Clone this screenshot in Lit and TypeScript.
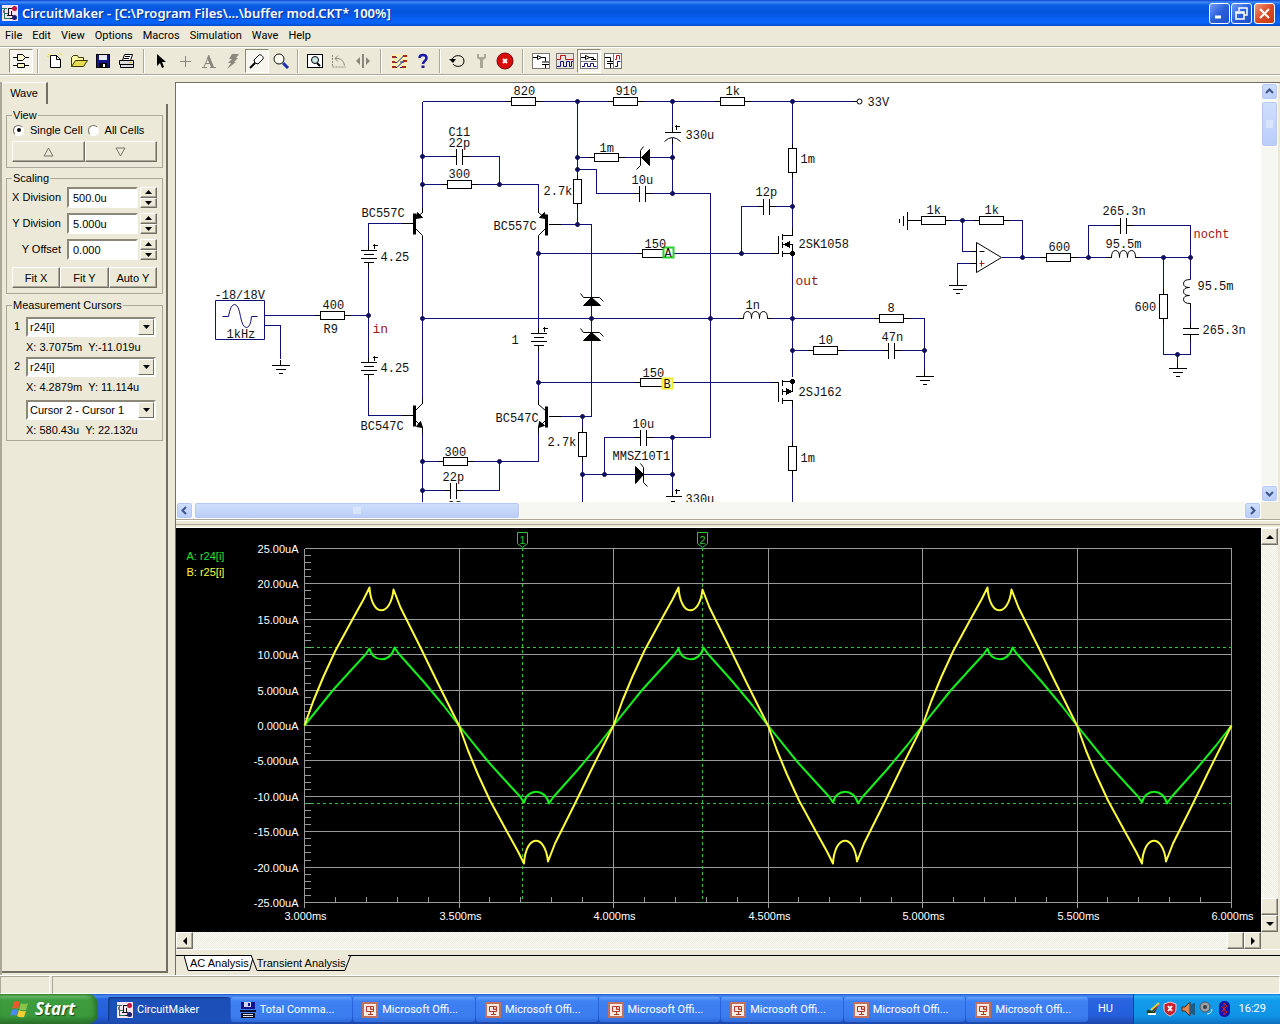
import { LitElement, html, svg, css } from "lit";
import { customElement, state } from "lit/decorators.js";
import { classMap } from "lit/directives/class-map.js";

/* ---------- shared pictograms ---------- */

const appIcon = html`<svg width="16" height="16" viewBox="0 0 16 16" aria-hidden="true">
  <rect width="16" height="16" fill="#f6e3f2" />
  <path d="M0 3.5h5M2.5 3v10M2 8.5h4M2 13.5h6" stroke="#1c7a5a" fill="none" />
  <path d="M6.5 3v7M5 10.5h6M9.5 6v4M8 13.5h3M6 3.5h4" stroke="#111" fill="none" />
  <circle cx="12.5" cy="3.5" r="2.5" fill="#c3123c" />
  <circle cx="12.5" cy="12.5" r="2.5" fill="#1b1f78" />
  <rect x="1" y="5" width="2" height="3" fill="#777" />
</svg>`;

const pptIcon = html`<svg width="16" height="16" viewBox="0 0 16 16" aria-hidden="true">
  <rect x="0" y="0" width="16" height="16" fill="#c0705c" />
  <rect x="2" y="2" width="12" height="12" fill="#fbeae4" />
  <path d="M4.5 4.5h7v5h-7zM6 12.5h5M8.5 10v2" stroke="#b03a24" fill="none" />
  <path d="M8.5 4.5v3h3" stroke="#b03a24" fill="#e39a87" />
</svg>`;

const diskIcon = html`<svg width="16" height="16" viewBox="0 0 16 16" aria-hidden="true">
  <path d="M1 0h14v7H1z" fill="#12128c" />
  <path d="M4 0h7v5H4z" fill="#cfd4f4" />
  <path d="M8 1h2v3H8z" fill="#12128c" />
  <path d="M0 8h16v2H0zM1 11h14v5H1z" fill="#0b0b2a" />
  <path d="M3 12h10v1H3zM3 14h10v1H3z" fill="#dcdcdc" />
</svg>`;

const glyphs: Record<string, unknown> = {
  parts: svg`<path d="M1 5.5h4M1 13.5h4M13 5.5h4M13 13.5h4M5.5 2.5h5l3 3-3 3h-5zM5.5 11.5h7v4h-7z" fill="#fffccf" stroke="#000"/>`,
  fresh: svg`<path d="M4.5 3.5h6l4 4v8h-10z" fill="#fff" stroke="#000"/><path d="M10.5 3.5v4h4" fill="none" stroke="#000"/><path d="M13 1l3 2M1 4l2 1M2 2l2 1" stroke="#e9dc3a"/>`,
  open: svg`<path d="M1.5 14.5v-9l2-2h4l1 2h5v3" fill="#fbf6a4" stroke="#3b3700"/><path d="M1.5 14.5l4-6h12l-4 6z" fill="#e5dc52" stroke="#3b3700"/>`,
  save: svg`<rect x="2.5" y="2.5" width="13" height="13" fill="#15158a" stroke="#000"/><rect x="5" y="3" width="8" height="5" fill="#e8e8f4"/><rect x="5" y="11" width="8" height="4" fill="#000"/><rect x="9" y="12" width="2" height="3" fill="#fff"/>`,
  print: svg`<path d="M4.5 8.5l2-6h8l-2 6" fill="#fff" stroke="#000"/><path d="M1.5 8.5h14v4h-14zM2.5 12.5h13v3h-13z" fill="#ddd" stroke="#000"/><path d="M7 4.5h5M6 6.5h5" stroke="#000"/><path d="M11 10.5h3" stroke="#e3c400"/>`,
  arrow: svg`<path d="M5 2v12l3-3 2 5 2-1-2-5h4z" fill="#000"/>`,
  plus: svg`<path d="M9.5 4v11M4 9.5h11" stroke="#8a887c"/>`,
  letter: svg`<path d="M2 15.5h5M10 15.5h6M4 15L9 3M6 11.5h6" fill="none" stroke="#8a887c"/><path d="M9 3l5 12h-3L7 6z" fill="#8a887c"/>`,
  bolt: svg`<path d="M8 2h7l-3 4h2l-4 4h2l-9 7 4-6H4l4-4H5z" fill="#8a887c"/>`,
  probe: svg`<path d="M7 11l-1-3 5-5c2-1 5 2 4 4l-5 5z" fill="#fff" stroke="#000"/><path d="M2 16l5-5" stroke="#000" stroke-width="2"/>`,
  zoom: svg`<circle cx="7" cy="7" r="5" fill="#fdfdf4" stroke="#111"/><path d="M11 11l5 5" stroke="#1a2fae" stroke-width="3"/>`,
  find: svg`<rect x="1.5" y="2.5" width="15" height="13" fill="#fff" stroke="#000"/><circle cx="9" cy="8" r="3.5" fill="#cfe7e7" stroke="#000"/><path d="M11 11l3 3" stroke="#000" stroke-width="2"/>`,
  rotate: svg`<path d="M2.5 3v12h13" fill="none" stroke="#8a887c" stroke-dasharray="2 1"/><path d="M5 6.5c6-1 9 3 9.500 7M5 6.500l3-3M5 6.500l3 3" fill="none" stroke="#8a887c"/>`,
  mirror: svg`<path d="M9 2v14" stroke="#8a887c" stroke-width="2"/><path d="M6 5v8L2 9zM12 5v8l4-4z" fill="#8a887c"/>`,
  net: svg`<rect x="1" y="2" width="16" height="15" fill="#f8f0b8"/><path d="M2 5.500h5M2 10.500h5l7-7M2 15.500h5l7-7M10 15.500h6M10 10h4" fill="none" stroke="#17247c"/><path d="M2 5h4M2 10h3M2 15h4M13 4h4M13 9h4M12 15h4" stroke="#a8261a" stroke-width="2"/>`,
  help: svg`<path d="M5.500 6c0-4 7-4 7 0 0 3-3.500 3-3.500 6" fill="none" stroke="#1a1aa6" stroke-width="2.500"/><rect x="7.500" y="13.500" width="3" height="2.500" fill="#1a1aa6"/>`,
  undo: svg`<path d="M4 8c1-6 12-6 12 1 0 6-8 7-11 3" fill="none" stroke="#000"/><path d="M1 7h7l-3 4z" fill="#000"/>`,
  wrench: svg`<path d="M5 2v4l3 2v8h3V8l3-2V2h-2v3H7V2z" fill="#aaa797"/>`,
  stop: svg`<circle cx="9" cy="9" r="8" fill="#d90b0b" stroke="#7c0606"/><path d="M7 7l4 4M11 7l-4 4" stroke="#fff" stroke-width="2"/>`,
  viewA: svg`<rect x="0.500" y="1.500" width="17" height="15" fill="#fff" stroke="#777"/><path d="M1 5.500h4M9 5.500h4.500v4M10 10h7M10 12.500h7M13.500 13v3M5.500 3.500l4 2-4 2z" fill="none" stroke="#000"/>`,
  viewB: svg`<rect x="0.500" y="1.500" width="17" height="15" fill="#e8e6dc" stroke="#777"/><path d="M1 7.500h3.500v-4h5v4H17" fill="none" stroke="#c01414"/><path d="M1 14.500h3.500v-5h3v5h3v-5h3v5h2v-5H17" fill="none" stroke="#12127c"/>`,
  viewC: svg`<rect x="0.500" y="1.500" width="17" height="15" fill="#fff" stroke="#777"/><path d="M0 9.500h18" stroke="#777"/><path d="M1 5.500h4M9 5.500h4.500v2M5.500 3.500l4 2-4 2zM11 7.500h5" fill="none" stroke="#000"/><path d="M2 14.500h2.500v-3h3v3h3v-3h3v3h3" fill="none" stroke="#12127c"/>`,
  viewD: svg`<rect x="0.500" y="1.500" width="17" height="15" fill="#fff" stroke="#777"/><path d="M9.500 1v16" stroke="#777"/><path d="M1 5.500h5.500v4M3 9.500h6M3 11.500h6M6.500 12v4" fill="none" stroke="#000"/><path d="M11 7.500h1.500v-4h3v4" fill="none" stroke="#c01414"/><path d="M11 14.500h2.500v-5h3" fill="none" stroke="#12127c"/>`,
};

const trayGlyphs = [
  svg`<path d="M2 10l6 2 4-8" fill="none" stroke="#1b3d1b" stroke-width="3"/><path d="M6 9l8-7" stroke="#e9d33a" stroke-width="2"/><path d="M3 13h8" stroke="#fff" stroke-width="2"/><path d="M8 11l6-7" stroke="#d23c8c"/>`,
  svg`<path d="M7 1l6 2v5c0 4-4 6-6 7-2-1-6-3-6-7V3z" fill="#c8202c" stroke="#f3c9cc"/><path d="M5 5l4 5M9 5l-4 5" stroke="#fff" stroke-width="2"/>`,
  svg`<path d="M1 6h3l5-5v14l-5-5H1z" fill="#e08652" stroke="#53250f"/><path d="M11 3v10M13 2v12" stroke="#222"/>`,
  svg`<ellipse cx="6" cy="6" rx="5" ry="5" fill="#9aa0a6" stroke="#50555a"/><circle cx="6" cy="6" r="2" fill="#3b3e42"/><path d="M8 13c3 0 5-2 5-5" fill="none" stroke="#e0ecf7"/>`,
  svg`<rect x="2" y="0" width="11" height="16" rx="5" fill="#1414a8"/><path d="M4 5l6 6-3 3V2l3 3-6 6" fill="none" stroke="#d21f2b"/>`,
];

/* ---------- schematic drawing ---------- */

const wires = [
  "M422 101H852", "M422 101V212", "M422 156H499V184", "M422 184H538V212", "M422 235V403", "M422 427V510",
  "M368 315V223H401", "M368 315V415H401", "M264 315H368", "M264 325H280V358",
  "M538 235V404", "M538 427V461H422", "M499 461V490H422", "M577 101V224", "M555 224H591V416H555",
  "M577 157H672", "M577 169H596V193H710V437H604V474", "M672 101V193", "M672 437V490", "M582 416V510", "M582 474H672",
  "M538 253H770", "M538 382H770", "M741 253V206H792", "M792 101V227", "M792 253V376", "M792 406V510",
  "M422 318H924V370", "M792 350H924",
  "M921 220H1022V257", "M962 220V251H970", "M970 263H957V280", "M1001 257H1190", "M1088 257V225H1190V354H1163V257", "M1177 354V364",
];
const nodes = [
  [422, 156], [422, 184], [499, 184], [422, 318], [368, 315], [422, 461], [422, 490], [499, 461], [538, 253], [538, 382],
  [577, 101], [577, 157], [577, 169], [577, 224], [672, 101], [672, 157], [672, 193], [792, 101], [792, 206], [741, 253],
  [591, 318], [710, 318], [792, 318], [792, 350], [924, 350], [582, 416], [582, 474], [604, 474], [672, 437], [672, 474],
  [962, 220], [1022, 257], [1088, 257], [1163, 257], [1190, 257], [1177, 354],
];
const resistorsH = [[511, 101], [613, 101], [720, 101], [447, 184], [594, 157], [642, 253], [640, 382], [443, 461], [320, 315], [879, 318], [813, 350], [921, 220], [979, 220], [1046, 257]];
const resistorsV = [[577, 179], [792, 148], [582, 432], [792, 446], [1163, 294]];
const capsH = [[456, 156], [639, 193], [763, 206], [450, 490], [640, 437], [888, 350], [1120, 225]];
const batteries = [[368, 250], [368, 362], [538, 333]];
const grounds = [[280, 365], [924, 376], [957, 285], [1177, 368]];
const labels: [number, number, string][] = [
  [513, 94, "820"], [448, 135, "C11"], [448, 146, "22p"], [448, 177, "300"], [361, 216, "BC557C"], [493, 229, "BC557C"],
  [380, 260, "4.25"], [380, 371, "4.25"], [214, 298, "-18/18V"], [226, 337, "1kHz"], [322, 308, "400"], [323, 332, "R9"],
  [360, 429, "BC547C"], [495, 421, "BC547C"], [444, 455, "300"], [442, 480, "22p"], [447, 509, "C8"], [511, 343, "1"],
  [615, 94, "910"], [725, 94, "1k"], [867, 105, "33V"], [685, 138, "330u"], [599, 151, "1m"], [543, 194, "2.7k"], [631, 183, "10u"],
  [800, 162, "1m"], [755, 195, "12p"], [644, 247, "150"], [798, 247, "2SK1058"], [745, 308, "1n"], [887, 311, "8"],
  [818, 343, "10"], [881, 340, "47n"], [642, 376, "150"], [798, 395, "2SJ162"], [800, 461, "1m"], [547, 445, "2.7k"],
  [632, 427, "10u"], [612, 459, "MMSZ10T1"], [685, 502, "330u"],
  [926, 213, "1k"], [984, 213, "1k"], [1048, 250, "600"], [1102, 214, "265.3n"], [1105, 247, "95.5m"],
  [1134, 310, "600"], [1197, 289, "95.5m"], [1202, 333, "265.3n"],
];

const schematic = () => svg`
  <g transform="translate(-175.5 -82.5)">
    <g class="wire">${wires.map((d) => svg`<path d=${d} />`)}</g>
    <g class="part">
      ${resistorsH.map(([x, y]) => svg`<path d="M${x - 6} ${y}h36" /><rect x=${x} y=${y - 4} width="24" height="8" />`)}
      ${resistorsV.map(([x, y]) => svg`<path d="M${x} ${y - 5}v34" /><rect x=${x - 4} y=${y} width="8" height="24" />`)}
      ${capsH.map(([x, y]) => svg`<path d="M${x} ${y}h6" class="gap" /><path d="M${x - 6} ${y}h6m0 -8v16M${x + 6} ${y - 8}v16m0 -8h6" />`)}
      ${batteries.map(([x, y]) => svg`<path d="M${x} ${y}v12" class="gap" /><path d="M${x} ${y - 6}v6M${x - 8} ${y}h16M${x - 5} ${y + 4}h10M${x - 8} ${y + 8}h16M${x - 5} ${y + 12}h10M${x} ${y + 12}v5M${x + 4} ${y - 5}h5M${x + 6} ${y - 7}v5" />`)}
      ${grounds.map(([x, y]) => svg`<path d="M${x} ${y - 6}v6M${x - 9} ${y}h18M${x - 5} ${y + 4}h10M${x - 2} ${y + 8}h4" />`)}
      <path d="M899 218v4M903 215v10M907 211v18M907 220h8" />
      <path d="M1190 328v6" class="gap" /><path d="M1190 322v6M1182 328h16M1182 334h16M1190 334v6" />
      <path d="M672 132v5" class="gap" /><path d="M664 132h16M672 126v6M672 138v5M674 126h5M676 124v5" />
      <path d="M664 141q8 -8 16 0" class="smooth" />
      <path d="M665 496h16M672 490v6M674 490h5M676 488v5M670 501h4" />
      <path d="M401 223h12M401 415h12M548 224h12M548 416h12" />
      <path d="M852 101h5" />
      <circle cx="859" cy="101" r="2.5" class="smooth" />
    </g>
    <g class="part smooth">
      <path d="M422 207v5l-7 6M415 228l7 7v5M422 398v5l-7 7M415 420l7 7v6" />
      <path d="M538 207v5l7 6M545 228l-7 7v5M538 399v5l7 6M545 420l-7 7v6" />
      <path class="solid" d="M415 218l2 -6 5 5zM545 218l-6 -1 5 -5zM422 427l-6 -1 4 -5zM538 427l1 -6 5 4z" />
      <path class="base" d="M414 213v21M414 405v21M546 214v21M546 406v21" />
      <path class="solid" d="M641 157l8 -8v16zM591 297l-8 8h17zM591 332l-8 8h17zM643 474l-8 -8v17z" />
      <path d="M643 146l-3 4v15l-4 4M580 293l3 4h16l4 4M580 328l3 4h16l4 4M640 463l3 4v15l4 4" />
    </g>
    <g class="part">
      <path d="M770 253h8M778 235v18M782 233v6M782 241v6M782 250v6M782 235h10v-8M782 253h10v-9h-10" />
      <path d="M770 382h8M778 382v19M782 379v6M782 388v6M782 397v6M782 381h10v10h-10M782 400h10v6" />
      <path class="solid" d="M784 244l5 -3v6zM791 391l-5 -3v6z" />
      <circle class="solid" cx="792" cy="253" r="2" /><circle class="solid" cx="792" cy="381" r="2" />
    </g>
    <g class="part smooth">
      <path class="gap" d="M743 318h24M1111 257h24M1190 279v24" />
      <path d="M738 318h5q0 -7 4 -7t4 7q0 -7 4 -7t4 7q0 -7 4 -7t4 7h4" />
      <path d="M1106 257h5q0 -7 4 -7t4 7q0 -7 4 -7t4 7q0 -7 4 -7t4 7h4" />
      <path d="M1190 279q-7 0 -7 4t6 4q-6 0 -6 4t6 4q-6 0 -6 4t7 4v5" />
      <path d="M976 242v30l25 -15zM970 251h6M970 263h6M979 251h5" />
      <path class="red" d="M979 263h5M981 260v6" />
      <path class="source" d="M215 300h49v39h-49zM222 316h6q2 -12 6 -12t6 12q2 11 6 11t5 -11h6" />
    </g>
    ${nodes.map(([x, y]) => svg`<circle class="node" cx=${x} cy=${y} r="2" />`)}
    <rect class="probe-a" x="663" y="247" width="10" height="10" />
    <rect class="probe-b" x="662" y="378" width="10" height="10" />
    <g class="label">
      ${labels.map(([x, y, t]) => svg`<text x=${x} y=${y}>${t}</text>`)}
      <text x="664" y="256">A</text><text x="663" y="387">B</text>
    </g>
    <g class="net">
      <text x="372" y="332">in</text><text x="795" y="284">out</text><text class="small" x="1193" y="237">nocht</text>
    </g>
  </g>`;

/* ---------- waveform plot ---------- */

const HALF = 154.5;
const X0 = 304;
const Y0 = 725;
type Pt = [number, number];
type Lobe = { rise: Pt[]; dip: [Pt, Pt, Pt]; fall: Pt[] };
const yellowLobe: Lobe = {
  rise: [[0, 0], [9, 25], [19, 49], [31, 75], [49, 108], [59, 126], [65, 138]],
  dip: [[67, 108], [86, 108], [89, 136]],
  fall: [[96, 118], [116, 78], [133, 43]],
};
const greenLobe: Lobe = {
  rise: [[0, 0], [29, 36], [49, 58], [61, 71], [65, 77]],
  dip: [[68, 63], [86, 62], [90, 78]],
  fall: [[94, 72], [119, 44], [139, 20]],
};
const trace = (lobe: Lobe) => {
  let d = "";
  for (let i = 0; i < 6; i++) {
    const sign = i % 2 ? 1 : -1;
    const at = ([x, v]: Pt) => `${X0 + i * HALF + x} ${Y0 + sign * v}`;
    d += lobe.rise.map((p, n) => (n || i ? "L" : "M") + at(p)).join("");
    d += "C" + lobe.dip.map(at).join(" ");
    d += lobe.fall.map((p) => "L" + at(p)).join("");
  }
  return d + `L${X0 + 6 * HALF} ${Y0}`;
};
const yLabels = ["25.00uA", "20.00uA", "15.00uA", "10.00uA", "5.000uA", "0.000uA", "-5.000uA", "-10.00uA", "-15.00uA", "-20.00uA", "-25.00uA"];
const xLabels = ["3.000ms", "3.500ms", "4.000ms", "4.500ms", "5.000ms", "5.500ms", "6.000ms"];
const yAt = (i: number) => Math.round(548 + i * 35.4);
const xAt = (i: number) => Math.round(X0 + i * HALF);

const plot = () => svg`
  <g transform="translate(-175.5 -527.5)">
    <g class="grid">
      ${yLabels.map((_, i) => svg`<path d="M304 ${yAt(i)}H1231" />`)}
      ${xLabels.map((_, i) => svg`<path d="M${xAt(i)} 548V907" />`)}
      ${Array.from({ length: 50 }, (_, i) => svg`<path d="M304 ${Math.round(548 + i * 7.08)}h6" />`)}
      ${Array.from({ length: 30 }, (_, i) => svg`<path d="M${Math.round(304 + i * 30.9)} 902v-6" />`)}
    </g>
    <path class="cursor" d="M304 647H1231M304 803H1231M522 547V902M702 547V902" />
    <path class="green" d=${trace(greenLobe)} />
    <path class="yellow" d=${trace(yellowLobe)} />
    <path class="flag" d="M517 532h10v11l-5 4 -5 -4zM697 532h10v11l-5 4 -5 -4z" />
    <g class="axis">
      ${yLabels.map((t, i) => svg`<text class="end" x="298" y=${yAt(i) + 4}>${t}</text>`)}
      ${xLabels.map((t, i) => svg`<text class="mid" x=${xAt(i) + 1} y="919">${t}</text>`)}
      <text class="flag-no" x="522" y="543">1</text><text class="flag-no" x="702" y="543">2</text>
      <text class="name-a" x="186" y="559">A: r24[i]</text>
      <text class="name-b" x="186" y="575">B: r25[i]</text>
    </g>
  </g>`;

/* ---------- wave control panel ---------- */

@customElement("wave-panel")
export class WavePanel extends LitElement {
  static styles = css`
    :host { display: flex; flex-direction: column; width: 168px; flex: none; box-sizing: border-box; font: 11px/14px "Liberation Sans", Arial, sans-serif; color: #000; border-left: 2px solid #aca899; }
    .tab { align-self: flex-start; font: inherit; color: inherit; border: 0; border-top: 1px solid #fff; border-right: 2px solid #716f64; background: #ece9d8; width: 46px; height: 22px; padding: 0 0 2px; }
    .page { flex: 1; border-right: 2px solid #716f64; border-bottom: 2px solid #716f64; padding: 4px 3px 0 4px; margin-bottom: 2px; display: flex; flex-direction: column; gap: 3px; }
    fieldset { margin: 0; padding: 1px 5px 5px; border: 1px solid #aca899; min-width: 0; }
    legend { padding: 0 1px; margin: 0; height: 14px; }
    .radios { display: flex; gap: 4px; height: 14px; align-items: center; margin-bottom: 4px; }
    .radios label { display: flex; align-items: center; gap: 5px; white-space: nowrap; }
    .radios input { appearance: none; margin: 0 1px; width: 11px; height: 11px; border-radius: 50%; background: #fff; border: 1px solid; border-color: #716f64 #fff #fff #716f64; display: grid; place-items: center; }
    .radios input:checked::after { content: ""; width: 4px; height: 4px; border-radius: 50%; background: #000; }
    .buttons { display: flex; }
    .buttons button, .spin button { font: inherit; color: #000; background: #ece9d8; border: 1px solid; border-color: #fff #716f64 #716f64 #fff; box-shadow: inset -1px -1px #aca899; padding: 0; }
    .buttons button { flex: 1; height: 21px; }
    .buttons svg { display: block; margin: auto; }
    .scaling { padding-top: 2px; }
    .row { display: grid; grid-template-columns: 53px 71px 17px; column-gap: 2px; align-items: center; margin-bottom: 5px; height: 21px; }
    .row label { text-align: right; white-space: nowrap; padding: 0 4px 2px 0; }
    .row input { font: inherit; width: 100%; height: 21px; box-sizing: border-box; border: 2px solid; border-color: #8b8878 #fff #fff #8b8878; padding: 0 4px; background: #fff; border-radius: 0; }
    .row + .buttons { margin-top: 7px; }
    .spin { display: grid; grid-template-rows: 1fr 1fr; height: 21px; }
    .spin button { display: grid; place-items: center; min-height: 0; }
    .cursors { padding: 5px 6px 3px 5px; display: grid; grid-template-columns: 14px 1fr; row-gap: 3px; margin-top: 1px; }
    .cursors label { padding: 2px 0 0 2px; }
    .cursors output { grid-column: 2; white-space: pre; }
    .drop { position: relative; height: 20px; }
    .drop select { appearance: none; font: inherit; width: 100%; height: 20px; box-sizing: border-box; border: 2px solid; border-color: #8b8878 #fff #fff #8b8878; border-radius: 0; background: #fff; padding: 0 18px 0 2px; color: #000; }
    .drop span { position: absolute; right: 2px; top: 2px; width: 16px; height: 16px; box-sizing: border-box; background: #ece9d8; border: 1px solid; border-color: #fff #716f64 #716f64 #fff; display: grid; place-items: center; pointer-events: none; }
    .third { grid-column: 2; margin-top: 3px; }
    .body { display: contents; }
  `;

  @state() private cell = "single";

  private arrow(up: boolean) {
    return html`<svg width="7" height="4" viewBox="0 0 7 4" aria-hidden="true"><path d=${up ? "M0 4L3.5 0 7 4z" : "M0 0h7L3.5 4z"} /></svg>`;
  }

  private row(id: string, text: string, value: string) {
    return html`<div class="row">
      <label for=${id}>${text}</label><input id=${id} .value=${value} />
      <div class="spin">
        <button aria-label="Increase ${text}">${this.arrow(true)}</button>
        <button aria-label="Decrease ${text}">${this.arrow(false)}</button>
      </div>
    </div>`;
  }

  private drop(id: string, text: string, name: string) {
    return html`<select id=${id} aria-label=${name}><option>${text}</option></select><span>${this.arrow(false)}</span>`;
  }

  render() {
    return html`
      <button class="tab">Wave</button>
      <div class="page">
        <fieldset>
          <legend>View</legend>
          <div class="radios">
            <label><input type="radio" name="cell" ?checked=${this.cell === "single"} @change=${() => (this.cell = "single")} />Single Cell</label>
            <label><input type="radio" name="cell" ?checked=${this.cell === "all"} @change=${() => (this.cell = "all")} />All Cells</label>
          </div>
          <div class="buttons">
            <button aria-label="Previous cell"><svg width="11" height="10"><path d="M1 9L5.5 1 10 9z" fill="none" stroke="#77756a" /></svg></button>
            <button aria-label="Next cell"><svg width="11" height="10"><path d="M1 1L5.5 9 10 1z" fill="none" stroke="#77756a" /></svg></button>
          </div>
        </fieldset>
        <fieldset class="scaling">
          <legend>Scaling</legend>
          ${this.row("xdiv", "X Division", "500.0u")} ${this.row("ydiv", "Y Division", "5.000u")} ${this.row("yoff", "Y Offset", "0.000")}
          <div class="buttons"><button>Fit X</button><button>Fit Y</button><button>Auto Y</button></div>
        </fieldset>
        <fieldset class="cursors">
          <legend>Measurement Cursors</legend>
          <label for="c1">1</label>
          <div class="drop">${this.drop("c1", "r24[i]", "Cursor 1")}</div>
          <output>${"X: 3.7075m  Y:-11.019u"}</output>
          <label for="c2">2</label>
          <div class="drop">${this.drop("c2", "r24[i]", "Cursor 2")}</div>
          <output>${"X: 4.2879m  Y: 11.114u"}</output>
          <div class="drop third">${this.drop("c3", "Cursor 2 - Cursor 1", "Cursor difference")}</div>
          <output>${"X: 580.43u  Y: 22.132u"}</output>
        </fieldset>
      </div>
    `;
  }
}

/* ---------- application shell ---------- */

@customElement("app-root")
export class AppRoot extends LitElement {
  static styles = css`
    :host { display: flex; flex-direction: column; height: 100vh; min-height: 700px; background: #ece9d8; color: #000; font: 11px/14px Roboto, Tahoma, "Noto Sans", sans-serif; overflow: hidden; }
    button { font: inherit; color: inherit; padding: 0; margin: 0; border: 0; background: none; }
    svg { display: block; }

    .title { display: flex; align-items: center; height: 26px; flex: none; padding: 0 5px 0 2px; gap: 4px; color: #fff; background: linear-gradient(#0a3fd0 0, #3f8cf8 2px, #0b5ee6 5px, #0453dc 12px, #0862f5 20px, #0664fa 23px, #0349c4 26px); }
    .title h1 { flex: 1; margin: 0; font: 600 13px/20px "Noto Sans", "Open Sans", sans-serif; text-shadow: 1px 1px #0a2f8f; white-space: nowrap; overflow: hidden; }
    .controls { display: flex; gap: 1px; }
    .controls button { width: 21px; height: 21px; border: 1px solid #fff; border-radius: 3px; background: linear-gradient(135deg, #6f9cf5, #2a5fdc 50%, #1f50c8); box-sizing: border-box; display: grid; place-items: center; }
    .controls .close { background: linear-gradient(135deg, #ee9a80, #dc4a22 50%, #c03a14); margin-left: 1px; }

    .menu { display: flex; height: 20px; flex: none; align-items: center; }
    .menu button { padding: 0 5px; height: 18px; }

    .tools { display: flex; align-items: center; height: 29px; flex: none; padding-left: 9px; border-top: 1px solid #aca899; border-bottom: 1px solid #aca899; box-shadow: inset 0 1px #fff, 0 1px #fff; box-sizing: border-box; }
    .tool { width: 24px; height: 24px; display: grid; place-items: center; box-sizing: border-box; }
    .tool.on { border: 1px solid; border-color: #8b8878 #fff #fff #8b8878; background: #f6f5ee; }
    .sep { width: 1px; height: 24px; margin: 0 4px; background: #aca899; border-right: 1px solid #fff; flex: none; }
    .sep.wide { margin: 0 5px; }

    .main { display: flex; flex: 1; min-height: 0; padding-top: 7px; }
    .work { flex: 1; min-width: 0; margin-left: 7px; border-left: 1px solid #716f64; display: grid; grid-template-rows: minmax(0, 438fr) 8px minmax(0, 421fr) 26px; }
    .pane { display: grid; grid-template-columns: minmax(0, 1fr) 19px; grid-template-rows: minmax(0, 1fr) 17px; min-height: 0; }
    .top { border-top: 1px solid #716f64; border-bottom: 1px solid #aca899; }
    .canvas { width: 100%; height: 100%; background: #fff; }
    .plot { width: 100%; height: 100%; background: #000; }
    .splitter { border-top: 1px solid #fff; border-bottom: 1px solid #fff; box-sizing: border-box; display: flex; align-items: center; }
    .splitter::before { content: ""; flex: 1; height: 1px; background: #aca899; }

    .bar { display: flex; background: #f7f7f2; }
    .bar.v { flex-direction: column; width: 17px; }
    .bar button { width: 17px; height: 17px; flex: none; display: grid; place-items: center; box-sizing: border-box; }
    .xp button, .xp .thumb { background: linear-gradient(#cfdffd, #bacdf9); border: 1px solid #fff; border-radius: 3px; box-shadow: inset 0 0 0 1px #b4c8f6; box-sizing: border-box; }
    .xp .thumb { display: grid; place-items: center; }
    .xp.h .thumb { width: 30%; margin-left: 1px; }
    .xp.v .thumb { height: 46px; margin-top: 1px; }
    .grow { flex: 1; }
    .classic { background: repeating-conic-gradient(#fff 0 25%, #ece9d8 0 50%) 0 0 / 2px 2px; }
    .classic button, .classic .thumb { background: #ece9d8; border: 1px solid; border-color: #fff #716f64 #716f64 #fff; box-shadow: inset -1px -1px #aca899; width: 17px; height: 17px; box-sizing: border-box; }

    .wire path { fill: none; stroke: #10107a; }
    .wire, .part { shape-rendering: crispEdges; }
    .part path, .part circle, .part rect { fill: none; stroke: #000; }
    .part rect, .part circle { fill: #fff; }
    .part .gap { stroke: #fff; stroke-width: 3; }
    .part .solid { fill: #000; }
    .part .base { stroke-width: 3; }
    .part .red { stroke: #b01818; }
    .part .source { stroke: #10107a; }
    .part.smooth, .part .smooth { shape-rendering: auto; }
    .node { fill: #10105c; stroke: #10105c; }
    .probe-a { fill: #fff; stroke: #22d42c; stroke-width: 2; }
    .probe-b { fill: #fffbc4; stroke: #f0ea30; stroke-width: 2; }
    .label text { font: 12px "Liberation Mono", "Courier New", monospace; fill: #111; }
    .net text { font: 13px "Liberation Mono", "Courier New", monospace; fill: #9c1414; }
    .net .small { font-size: 12px; }

    .grid path { fill: none; stroke: #9a9a9a; shape-rendering: crispEdges; }
    .cursor { fill: none; stroke: #2fc43a; stroke-dasharray: 3 3; shape-rendering: crispEdges; }
    .green, .yellow { fill: none; stroke-width: 2; stroke-linejoin: round; }
    .green { stroke: #14f01c; }
    .yellow { stroke: #fdfd3c; }
    .flag { fill: #000; stroke: #2fc43a; }
    .axis text { font: 11px "Liberation Sans", Arial, sans-serif; fill: #fff; }
    .axis .end { text-anchor: end; }
    .axis .mid { text-anchor: middle; }
    .axis .flag-no { text-anchor: middle; fill: #2fc43a; }
    .axis .name-a { fill: #22e02c; }
    .axis .name-b { fill: #fdfd3c; }

    .tabs { display: flex; align-items: flex-start; padding-top: 5px; border-top: 1px solid #fff; box-sizing: border-box; font-family: "Liberation Sans", Arial, sans-serif; }
    .tabs::before { content: ""; width: 8px; border-top: 1px solid #000; }
    .tabs::after { content: ""; flex: 1; border-top: 1px solid #000; }
    .tabs button { display: grid; height: 17px; margin-right: -3px; }
    .tabs svg { grid-area: 1 / 1; width: 0; min-width: 100%; height: 17px; }
    .tabs span { grid-area: 1 / 1; padding: 1px 5px 0 6px; z-index: 1; white-space: nowrap; }

    .status { display: flex; height: 19px; flex: none; gap: 2px; border-top: 1px solid #fff; box-sizing: border-box; }
    .status div { border: 1px solid; border-color: #aca899 #fff #fff #aca899; box-sizing: border-box; flex: 1; }
    .status .first { flex: none; width: 50px; }

    .task { display: flex; height: 30px; flex: none; color: #fff; background: linear-gradient(#1f4fc0 0, #4a8df5 2px, #2a65e0 5px, #245edb 22px, #1b47a8 30px); }
    .start { width: 98px; margin-right: 10px; display: flex; align-items: center; gap: 5px; padding-left: 10px; font: italic 700 17px/24px "Open Sans", "Noto Sans", sans-serif; text-shadow: 1px 1px 1px #174a17; border-radius: 0 10px 10px 0; background: linear-gradient(#3a8a3a 0, #6cc06c 2px, #3f9d3f 6px, #3a983a 22px, #2a702a 30px); box-shadow: inset -3px 0 5px #2a702a; }
    .apps { flex: 1; display: flex; gap: 1px; min-width: 0; }
    .app { flex: 1 1 0; min-width: 0; display: flex; align-items: center; gap: 4px; padding-left: 9px; margin: 3px 0 2px; border-radius: 3px; background: linear-gradient(#67a3fb 0, #3f81f2 4px, #3a7bee 20px, #2f69d6 25px); white-space: nowrap; overflow: hidden; }
    .app.on { background: #1d4fb8; box-shadow: inset 1px 1px 2px #123785; }
    .lang { width: 45px; padding-right: 10px; }
    .tray { display: flex; align-items: center; width: 147px; box-sizing: border-box; padding: 0 14px 0 11px; gap: 3px; border-left: 1px solid #0b3fa8; background: linear-gradient(#0f6fcf 0, #2db4f6 2px, #139cec 6px, #1094e6 22px, #0d70c0 30px); }
    .tray time { margin-left: auto; }
    .tray svg { flex: none; }
  `;

  @state() private active = 0;

  private tool(name: string, label: string, on = false) {
    return html`<button class=${classMap({ tool: true, on })} aria-label=${label}>
      <svg width="18" height="18" viewBox="0 0 18 18" aria-hidden="true">${glyphs[name]}</svg>
    </button>`;
  }

  private chevron(d: string) {
    return html`<svg width="9" height="9" aria-hidden="true"><path d=${d} fill="none" stroke="#3c5688" stroke-width="2" /></svg>`;
  }

  private tri(d: string) {
    return html`<svg width="8" height="8" aria-hidden="true"><path d=${d} /></svg>`;
  }

  render() {
    const tabs = ["AC Analysis", "Transient Analysis"];
    return html`
      <header class="title">
        ${appIcon}
        <h1>CircuitMaker - [C:\\Program Files\\...\\buffer mod.CKT* 100%]</h1>
        <div class="controls">
          <button aria-label="Minimize"><svg width="13" height="13"><path d="M2 10h6" stroke="#fff" stroke-width="3" /></svg></button>
          <button aria-label="Restore"><svg width="13" height="13"><path d="M4 4V1h8v7H9M1 5h8v7H1zM1 6h8" fill="none" stroke="#fff" stroke-width="1.5" /></svg></button>
          <button class="close" aria-label="Close"><svg width="13" height="13"><path d="M2 2l9 9M11 2l-9 9" stroke="#fff" stroke-width="2" /></svg></button>
        </div>
      </header>
      <nav class="menu">
        ${["File", "Edit", "View", "Options", "Macros", "Simulation", "Wave", "Help"].map((m) => html`<button>${m}</button>`)}
      </nav>
      <div class="tools" role="toolbar">
        ${this.tool("parts", "Parts", true)}<i class="sep"></i>
        ${this.tool("fresh", "New")}${this.tool("open", "Open")}${this.tool("save", "Save")}${this.tool("print", "Print")}<i class="sep"></i>
        ${this.tool("arrow", "Select")}${this.tool("plus", "Wire")}${this.tool("letter", "Text")}${this.tool("bolt", "Delete")}${this.tool("probe", "Probe", true)}${this.tool("zoom", "Zoom")}<i class="sep"></i>
        ${this.tool("find", "Fit")}${this.tool("rotate", "Rotate")}${this.tool("mirror", "Mirror")}<i class="sep wide"></i>
        ${this.tool("net", "Simulation mode")}${this.tool("help", "Help")}<i class="sep"></i>
        ${this.tool("undo", "Reset")}${this.tool("wrench", "Setup")}${this.tool("stop", "Stop")}<i class="sep wide"></i>
        ${this.tool("viewA", "Schematic")}${this.tool("viewB", "Waveforms")}${this.tool("viewC", "Split horizontally", true)}${this.tool("viewD", "Split vertically")}
      </div>
      <main class="main">
        <wave-panel></wave-panel>
        <section class="work">
          <div class="pane top">
            <svg class="canvas" role="img" aria-label="Schematic">${schematic()}</svg>
            <div class="bar v xp">
              <button aria-label="Scroll up">${this.chevron("M1 6l3.5-3.5L8 6")}</button>
              <div class="thumb"><svg width="7" height="8"><path d="M0 1h7M0 3h7M0 5h7M0 7h7" stroke="#eef4fe" /></svg></div>
              <div class="grow"></div>
              <button aria-label="Scroll down">${this.chevron("M1 3l3.5 3.5L8 3")}</button>
            </div>
            <div class="bar h xp">
              <button aria-label="Scroll left">${this.chevron("M6 1L2.5 4.5 6 8")}</button>
              <div class="thumb"><svg width="8" height="7"><path d="M1 0v7M3 0v7M5 0v7M7 0v7" stroke="#eef4fe" /></svg></div>
              <div class="grow"></div>
              <button aria-label="Scroll right">${this.chevron("M3 1l3.5 3.5L3 8")}</button>
            </div>
          </div>
          <div class="splitter"></div>
          <div class="pane">
            <svg class="plot" role="img" aria-label="Transient waveforms">${plot()}</svg>
            <div class="bar v classic">
              <button aria-label="Scroll up">${this.tri("M0 6h8L4 2z")}</button>
              <div class="grow"></div><div class="thumb"></div>
              <button aria-label="Scroll down">${this.tri("M0 2h8L4 6z")}</button>
            </div>
            <div class="bar classic">
              <button aria-label="Scroll left">${this.tri("M6 0v8L2 4z")}</button>
              <div class="grow"></div><div class="thumb"></div>
              <button aria-label="Scroll right">${this.tri("M2 0v8l4-4z")}</button>
            </div>
          </div>
          <nav class="tabs">
            ${tabs.map((t, i) => html`<button @click=${() => (this.active = i)}>
              <svg viewBox="0 0 100 17" preserveAspectRatio="none" aria-hidden="true">
                <path d="M0 0L6 15.500H94L100 0z" fill=${i === this.active ? "#fff" : "#ece9d8"} />
                <path d=${i === this.active ? "M100 0.500H0L6 15.500H94L100 0" : "M0 0L6 15.500H94L100 0"} fill="none" stroke="#000" vector-effect="non-scaling-stroke" />
              </svg><span>${t}</span></button>`)}
          </nav>
        </section>
      </main>
      <div class="status"><div class="first"></div><div></div></div>
      <footer class="task">
        <button class="start">
          <svg width="20" height="20" viewBox="0 0 20 20" aria-hidden="true">
            <path d="M4 3q3-2 6 0l-2 7q-3-2-6 0z" fill="#e8592b" /><path d="M11 4q3 2 7 0l-2 7q-4 1-7-1z" fill="#8bc34a" />
            <path d="M2 11q3-2 6 0l-2 6q-3-2-6 0z" fill="#4c8af0" /><path d="M9 11q3 2 7 1l-2 6q-4 1-7-1z" fill="#f7cf34" />
          </svg>Start
        </button>
        <nav class="apps">
          <button class="app on">${appIcon}<span>CircuitMaker</span></button>
          <button class="app">${diskIcon}<span>Total Comma...</span></button>
          ${[0, 1, 2, 3, 4, 5].map(() => html`<button class="app">${pptIcon}<span>Microsoft Offi...</span></button>`)}
        </nav>
        <button class="lang">HU</button>
        <div class="tray">
          ${trayGlyphs.map((g) => html`<svg width="15" height="16" viewBox="0 0 15 16" aria-hidden="true">${g}</svg>`)}
          <time>16:29</time>
        </div>
      </footer>
    `;
  }
}
